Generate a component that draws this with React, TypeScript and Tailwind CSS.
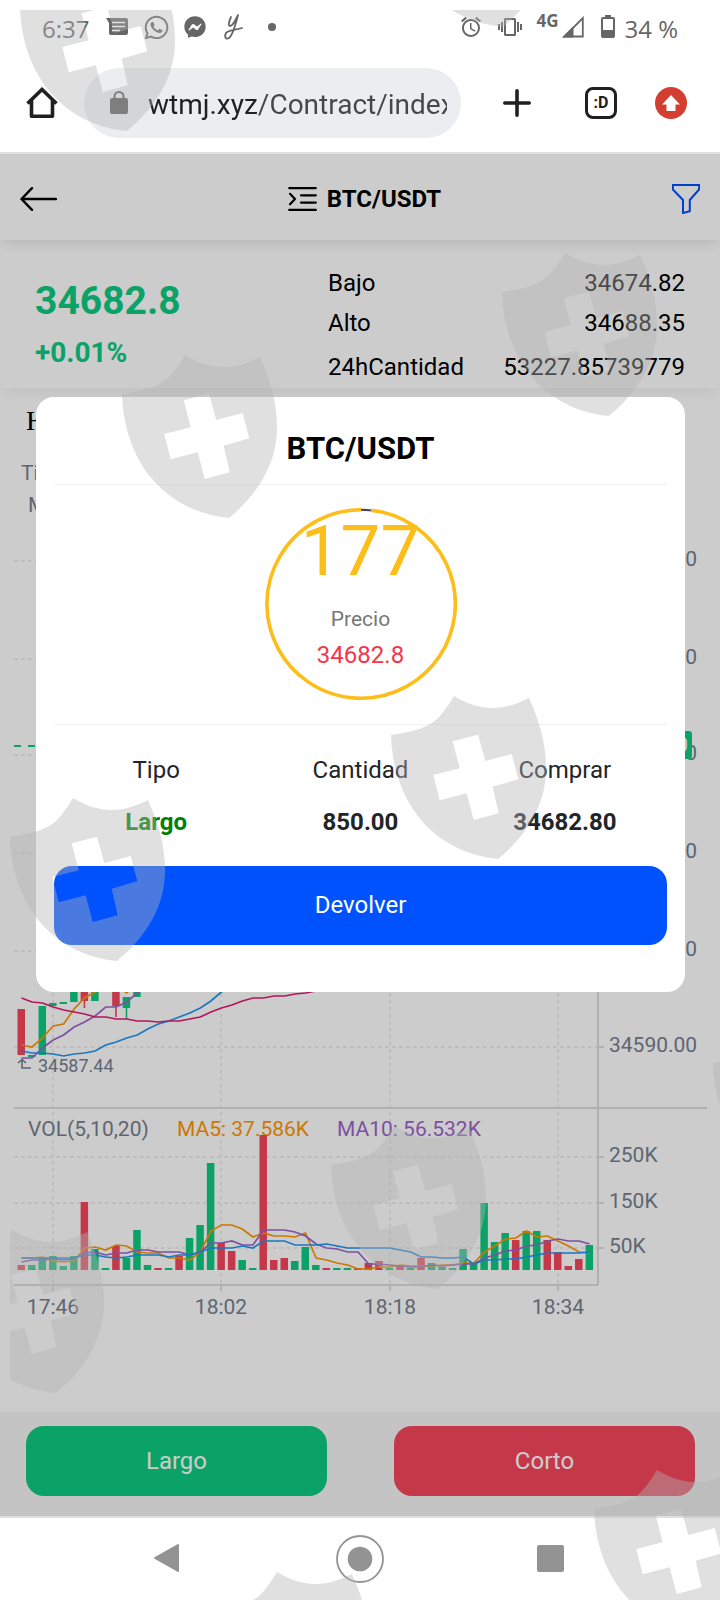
import { FaFacebookMessenger, FaWhatsapp } from "react-icons/fa";
import { MdAlarm, MdVibration } from "react-icons/md";

const GREEN = "#0ecb81";
const RED = "#f6465d";
const ORANGE = "#ff9600";
const PURPLE = "#9d65c9";
const BLUE = "#2196f3";
const PINK = "#e11d74";
const AXIS = "#76808f";

// Candle slots are evenly spaced, 55 on screen
const STEP = 10.52;
const centerX = (i: number) => 21.5 + STEP * i;

const VOLUME_BASE = 1270;

const volumeHeights = [
  5, 5, 13, 14, 4, 14, 68, 21, 2, 24, 12, 40, 5, 2, 2, 14, 32, 45, 107, 27, 19, 10, 2, 135, 10, 12, 9, 23, 5,
  2, 2, 2, 2, 7, 9, 2, 5, 2, 12, 7, 3, 2, 21, 7, 67, 28, 37, 30, 39, 39, 30, 18, 4, 11, 25,
];
const fallingBars = [0, 6, 9, 13, 15, 19, 20, 23, 24, 25, 29, 32, 33, 34, 36, 38, 47, 50, 51, 52, 53];

const volumeMa5 = [
  12, 12, 13, 9, 8, 9, 22, 23, 20, 25, 24, 18, 17, 17, 12, 12, 10, 18, 39, 45, 45, 41, 33, 37, 34, 34, 33, 37,
  12, 10, 7, 5, 1, 1, 3, 3, 5, 4, 4, 4, 5, 5, 7, 7, 18, 24, 31, 32, 39, 33, 34, 29, 24, 18, 17,
];
const volumeMa10 = [
  8, 10, 10, 11, 10, 11, 17, 18, 15, 17, 17, 20, 20, 18, 18, 18, 15, 18, 27, 27, 29, 25, 25, 40, 40, 40, 38,
  34, 26, 22, 21, 18, 18, 6, 6, 5, 4, 3, 3, 5, 4, 5, 6, 6, 12, 15, 19, 20, 24, 25, 29, 31, 29, 29, 26,
];
const volumeMa20 = [
  12, 12, 12, 12, 12, 12, 15, 15, 13, 12, 13, 15, 15, 15, 13, 15, 15, 18, 22, 22, 22, 24, 22, 29, 29, 29, 25,
  25, 25, 26, 24, 22, 22, 22, 22, 22, 20, 18, 13, 13, 12, 12, 13, 6, 10, 10, 11, 11, 13, 15, 17, 17, 17, 17, 18,
];

const priceLines = [
  { color: ORANGE, ys: [1045, 1047, 1038, 1026, 1024, 1009, 998, 992, 985, 986, 993, 983] },
  { color: PURPLE, ys: [1058, 1058, 1048, 1040, 1035, 1027, 1022, 1016, 1007, 1007, 1002, 993, 983] },
  {
    color: BLUE,
    ys: [1051, 1053, 1053, 1054, 1056, 1054, 1053, 1051, 1045, 1042, 1038, 1035, 1029, 1024, 1021, 1017, 1013, 1008, 1001, 992, 983],
  },
  {
    color: PINK,
    ys: [
      998, 1002, 1003, 1007, 1010, 1012, 1014, 1017, 1017, 1019, 1019, 1021, 1021, 1022, 1021, 1021, 1019, 1017,
      1012, 1008, 1005, 1001, 998, 998, 996, 996, 994, 993, 991, 988,
    ],
  },
];

const candles = [
  { i: 0, top: 1009, bottom: 1055, low: 1055, color: RED },
  { i: 1, top: 1055, bottom: 1057, low: 1057, color: GREEN },
  { i: 2, top: 1006, bottom: 1055, low: 1055, color: GREEN },
  { i: 3, top: 1003, bottom: 1006, low: 1006, color: GREEN },
  { i: 4, top: 1002, bottom: 1004, low: 1004, color: GREEN },
  { i: 5, top: 975, bottom: 1002, low: 1002, color: GREEN },
  { i: 6, top: 975, bottom: 1001, low: 1008, color: RED },
  { i: 7, top: 975, bottom: 1001, low: 1001, color: GREEN },
  { i: 9, top: 975, bottom: 1006, low: 1017, color: RED },
  { i: 10, top: 997, bottom: 1008, low: 1019, color: GREEN },
  { i: 11, top: 975, bottom: 997, low: 997, color: GREEN },
];

const priceLabels = [
  { y: 561, label: "34740.00" },
  { y: 659, label: "34710.00" },
  { y: 755, label: "34680.00" },
  { y: 853, label: "34650.00" },
  { y: 951, label: "34620.00" },
  { y: 1047, label: "34590.00" },
];
const volumeLabels = [
  { y: 1157, label: "250K" },
  { y: 1203, label: "150K" },
  { y: 1248, label: "50K" },
];
const timeLabels = [
  { x: 53, label: "17:46" },
  { x: 221, label: "18:02" },
  { x: 390, label: "18:18" },
  { x: 558, label: "18:34" },
];

const shields = [
  [20, 7], [396, -97], [122, 394], [502, 292], [391, 735], [10, 837],
  [331, 1165], [-51, 1269], [713, 1063], [594, 1509], [214, 1611],
];

function toPoints(ys: number[]) {
  return ys.map((y, i) => `${centerX(i).toFixed(1)},${y}`).join(" ");
}

function StatusBar() {
  return (
    <div className="flex h-[54px] items-center justify-between px-[42px] font-['Open_Sans',sans-serif] text-[#666]">
      <div className="flex items-center">
        <span className="mt-1 w-[64px] text-2xl">6:37</span>
        <svg className="h-[18px] w-[22px]" viewBox="0 0 22 18" fill="currentColor">
          <path d="M0 0H20Q22 0 22 2V15Q22 17 20 17H5Q3 17 3 15V5Z" />
          <path d="M6 4.5H19M6 8.5H19M6 12.5H14" stroke="#fff" strokeWidth="1.6" />
        </svg>
        <FaWhatsapp className="ml-[15px] size-[27px]" />
        <FaFacebookMessenger className="ml-[14px] size-[22px]" />
        <svg className="ml-[18px] h-[28px] w-[20px]" viewBox="0 0 20 28" fill="none" stroke="currentColor" strokeWidth="1.8" strokeLinecap="round" strokeLinejoin="round">
          <path d="M7 4C5 8 4 13 6 13C9 13 11 8 14 2C12 10 9 22 5 25C2 27 0 24 2 20C4 17 12 17 18 15" />
        </svg>
        <span className="ml-6 size-2 rounded-full bg-[#666]" />
      </div>
      <div className="flex items-center">
        <MdAlarm className="size-6" />
        <MdVibration className="ml-[15px] size-6" />
        <span className="ml-[14px] -mt-3 text-[17px] leading-5 font-bold">4G</span>
        <svg className="ml-1 h-[22px] w-[22px]" viewBox="0 0 22 22">
          <path d="M20.8 2V20.5H2.5Z" fill="none" stroke="currentColor" strokeWidth="1.8" />
          <path d="M0 21.5L11.5 10V21.5Z" fill="currentColor" />
        </svg>
        <svg className="ml-[17px] h-6 w-[14px]" viewBox="0 0 14 24">
          <path d="M4 0H10V2H4Z" fill="currentColor" />
          <rect x="1" y="3" width="12" height="19" rx="1" fill="none" stroke="currentColor" strokeWidth="2" />
          <path d="M1 15H13V23H1Z" fill="currentColor" />
        </svg>
        <span className="mt-1 ml-[9px] text-2xl">34 %</span>
      </div>
    </div>
  );
}

function BrowserBar() {
  return (
    <div className="flex h-[98px] items-center pr-[33px] pl-[26px] text-[#202020]">
      <button aria-label="Home">
        <svg className="size-8" viewBox="0 0 32 32" fill="none" stroke="currentColor" strokeWidth="3.6" strokeLinejoin="round">
          <path d="M5.5 13V29.3H26.5V13" />
          <path d="M1.5 16.5L16 2.5L30.5 16.5" strokeLinejoin="miter" />
        </svg>
      </button>
      <div className="ml-[26px] flex h-[70px] min-w-0 flex-1 items-center rounded-full bg-[#ebedf1] pr-[14px] pl-[26px]">
        <svg className="h-6 w-[18px] shrink-0 text-[#595959]" viewBox="0 0 18 24">
          <rect y="7" width="18" height="16" rx="2" fill="currentColor" />
          <path d="M4.500 9V5.500A4.500 4.500 0 0 1 13.500 5.500V9" fill="none" stroke="currentColor" strokeWidth="2" />
        </svg>
        <input
          aria-label="Address"
          className="ml-5 min-w-0 flex-1 bg-[linear-gradient(to_right,#202020_109px,#474747_109px)] bg-clip-text pt-1 text-[28px] leading-10 text-transparent outline-none"
          defaultValue="wtmj.xyz/Contract/index"
        />
      </div>
      <button aria-label="New tab" className="ml-[42px]">
        <svg className="size-7" viewBox="0 0 28 28" stroke="currentColor" strokeWidth="3.6" strokeLinecap="round">
          <path d="M14 1.8V26.2M1.8 14H26.2" />
        </svg>
      </button>
      <button className="ml-[54px] flex size-8 items-center justify-center rounded-lg border-[3px] border-[#202020] text-base leading-none font-bold" aria-label="Tabs">
        :D
      </button>
      <button aria-label="Update" className="ml-[38px]">
        <svg className="size-8" viewBox="0 0 32 32">
          <circle cx="16" cy="16" r="16" fill="#d43e31" />
          <path d="M16 8L25 17.500H20.500V24H11.500V17.500H7Z" fill="#fff" />
        </svg>
      </button>
    </div>
  );
}

function AppHeader() {
  return (
    <header className="flex h-[86px] items-center justify-between px-5 pt-1 shadow-[0_8px_12px_-4px_rgba(0,0,0,0.1)]">
      <button aria-label="Back">
        <svg className="h-6 w-[37px]" viewBox="0 0 37 24" fill="none" stroke="#000" strokeWidth="2.4" strokeLinecap="round" strokeLinejoin="round">
          <path d="M12 1.2L1.5 12L12 22.8M1.5 12H36" />
        </svg>
      </button>
      <div className="flex items-center gap-[10px]">
        <svg className="h-6 w-[29px]" viewBox="0 0 29 24" fill="none" stroke="#000" strokeWidth="2.2" strokeLinecap="round" strokeLinejoin="round">
          <path d="M1.2 1.1H27.8M13 8.3H27.8M13 15.6H27.8M1.2 22.9H27.8M2 6.8L7 12L2 17.2" />
        </svg>
        <h1 className="text-2xl font-bold">BTC/USDT</h1>
      </div>
      <button aria-label="Filter">
        <svg className="h-[30px] w-7" viewBox="0 0 28 30" fill="none" stroke="#0052ff" strokeWidth="2">
          <path d="M.9 1H27.1V5.5L17.8 16V27.3L11 29V16L.9 5.5Z" />
        </svg>
      </button>
    </header>
  );
}

function Stats() {
  return (
    <section className="flex h-[148px] px-[35px] shadow-[0_8px_12px_-4px_rgba(0,0,0,0.06)]">
      <div className="flex flex-1 flex-col gap-4 pt-[41px] font-bold text-[#0ecb81]">
        <p className="text-[39px] leading-10">34682.8</p>
        <p className="text-[28px] leading-8">+0.01%</p>
      </div>
      <dl className="w-[357px] pt-[31px] text-2xl leading-6">
        <div className="flex justify-between">
          <dt>Bajo</dt>
          <dd>34674.82</dd>
        </div>
        <div className="mt-4 flex justify-between">
          <dt>Alto</dt>
          <dd>34688.35</dd>
        </div>
        <div className="mt-5 flex justify-between">
          <dt>24hCantidad</dt>
          <dd>53227.85739779</dd>
        </div>
      </dl>
    </section>
  );
}

function Chart() {
  return (
    <svg className="block w-full font-[Roboto,sans-serif] text-[21px]" viewBox="0 440 720 900" fill={AXIS}>
      {/* Grid */}
      <g stroke="#ededed" strokeWidth="2" strokeDasharray="3.5 3.5">
        {[...priceLabels, ...volumeLabels].map(({ y }) => (
          <line key={y} x1="14" x2="598" y1={y} y2={y} />
        ))}
        {timeLabels.map(({ x }) => (
          <line key={x} x1={x} x2={x} y1="440" y2="1284" />
        ))}
      </g>

      <text x="21" y="480">Ti</text>
      <text x="28" y="512">M</text>

      {/* Candles */}
      {candles.map((c) => (
        <g key={c.i} fill={c.color}>
          <rect x={centerX(c.i) - 4} y={c.top} width="7.5" height={c.bottom - c.top} />
          <rect x={centerX(c.i) - 1} y={c.top} width="1.6" height={c.low - c.top} />
        </g>
      ))}
      {priceLines.map((line) => (
        <polyline key={line.color} points={toPoints(line.ys)} fill="none" stroke={line.color} strokeWidth="1.7" />
      ))}
      <path d="M18 1063L22 1059.500L26 1063M22 1060V1068H31" fill="none" stroke={AXIS} strokeWidth="1.6" />
      <text x="38" y="1072" className="text-[18px]">34587.44</text>

      {/* Volume */}
      <text x="28" y="1136">VOL(5,10,20)</text>
      <text x="177" y="1136" fill={ORANGE}>MA5: 37.586K</text>
      <text x="337" y="1136" fill={PURPLE}>MA10: 56.532K</text>
      {volumeHeights.map((h, i) => (
        <rect
          key={i}
          x={centerX(i) - 4}
          y={VOLUME_BASE - h}
          width="7.5"
          height={h}
          fill={fallingBars.includes(i) ? RED : GREEN}
        />
      ))}
      {[
        { color: ORANGE, values: volumeMa5 },
        { color: PURPLE, values: volumeMa10 },
        { color: BLUE, values: volumeMa20 },
      ].map(({ color, values }) => (
        <polyline
          key={color}
          points={toPoints(values.map((v) => VOLUME_BASE - v))}
          fill="none"
          stroke={color}
          strokeWidth="1.7"
        />
      ))}

      {/* Axes */}
      <g stroke="#ddd" strokeWidth="2">
        <path d="M14 1108H707M598 440V1285M14 1285H598" />
        {[...priceLabels, ...volumeLabels].map(({ y }) => (
          <path key={y} d={`M598 ${y}H604`} />
        ))}
        {timeLabels.map(({ x }) => (
          <path key={x} d={`M${x} 1285V1291`} />
        ))}
      </g>
      {[...priceLabels, ...volumeLabels].map(({ y, label }) => (
        <text key={label} x="609" y={y + 5}>{label}</text>
      ))}
      {timeLabels.map(({ x, label }) => (
        <text key={label} x={x} y="1314" textAnchor="middle">{label}</text>
      ))}

      {/* Last price */}
      <line x1="14" x2="598" y1="746" y2="746" stroke={GREEN} strokeWidth="2" strokeDasharray="7 7" />
      <rect x="598" y="731" width="94" height="28" rx="3" fill={GREEN} />
      <text x="600" y="752" fill="#fff">34682.80</text>
    </svg>
  );
}

function OrderDialog() {
  return (
    <div role="dialog" aria-labelledby="order-title" className="w-full rounded-[18px] bg-white px-[18px] pb-[47px] text-center">
      <h2 id="order-title" className="border-b border-[#f2f2f2] pt-[34px] pb-[17px] text-[31px] leading-9 font-bold">
        BTC/USDT
      </h2>
      <div className="border-b border-[#f2f2f2] pt-[23px] pb-6">
        <div className="relative mx-auto size-48 pt-[7px]">
          <svg className="absolute inset-0 size-full" viewBox="0 0 192 192" fill="none">
            <circle cx="96" cy="96" r="94.200" stroke="#3f4156" strokeWidth="2" />
            <path d="M105.800 2.300A94.200 94.200 0 1 1 96 1.800" stroke="#fdbe19" strokeWidth="3.600" />
          </svg>
          <p className="text-[71px] leading-[72px] text-[#fdbe19]">177</p>
          <p className="mt-[18px] text-[21px] leading-7 text-[#777]">Precio</p>
          <p className="mt-2 text-2xl leading-7 text-[#f6354a]">34682.8</p>
        </div>
      </div>
      <table className="mt-[19px] w-full table-fixed text-2xl text-[#212529]">
        <thead>
          <tr className="h-[52px]">
            <th className="font-normal">Tipo</th>
            <th className="font-normal">Cantidad</th>
            <th className="font-normal">Comprar</th>
          </tr>
        </thead>
        <tbody>
          <tr className="h-[52px] font-bold">
            <td className="text-[#008000]">Largo</td>
            <td>850.00</td>
            <td>34682.80</td>
          </tr>
        </tbody>
      </table>
      <button className="mt-[18px] h-[79px] w-full rounded-[18px] bg-[#0052ff] pb-[2px] text-2xl text-white">Devolver</button>
    </div>
  );
}

function NavBar() {
  return (
    <nav className="flex h-[84px] items-center justify-between border-t-2 border-[#e0e0e0] px-[142px] text-[#939393]">
      <button aria-label="Back">
        <svg className="size-12" viewBox="0 0 48 48" fill="currentColor" stroke="currentColor" strokeWidth="2" strokeLinejoin="round">
          <path d="M13 23L36 10V36Z" />
        </svg>
      </button>
      <button aria-label="Home screen">
        <svg className="size-12" viewBox="0 0 48 48" fill="currentColor">
          <circle cx="24" cy="24" r="23" fill="none" stroke="currentColor" strokeWidth="1.8" />
          <circle cx="24" cy="24" r="12.300" />
        </svg>
      </button>
      <button aria-label="Recent apps">
        <svg className="size-12" viewBox="0 0 48 48" fill="currentColor">
          <rect x="7" y="10" width="27" height="27" rx="2" />
        </svg>
      </button>
    </nav>
  );
}

function Watermark() {
  return (
    <div className="pointer-events-none absolute top-[10px] right-0 bottom-0 left-[10px]">
      <svg className="size-full overflow-hidden" fill="#b4b4b4" fillOpacity="0.41" fillRule="evenodd" aria-hidden="true">
        {shields.map(([x, y]) => (
          <path
            key={`${x}-${y}`}
            transform={`translate(${x - 10} ${y - 10})`}
            d="M0 0C22 -3 38 -8 46 -16C52 -22 57 -29 63 -39C72 -34 84 -27 102 -27C115 -27 128 -32 138 -37C149 -12 155 8 155 34C155 70 135 101 107 124C45 118 2 70 0 0ZM61.700 6.300L87 -.3L94.300 26L120.700 19L127.300 44.300L101.700 51.700L107.700 78.300L82.700 85L75.700 58.300L48.700 65.300L42.300 40L68.700 33.300Z"
          />
        ))}
      </svg>
    </div>
  );
}

function App() {
  return (
    <div className="relative overflow-hidden bg-white font-[Roboto,sans-serif] text-black">
      <StatusBar />
      <BrowserBar />

      <main className="relative border-t-2 border-[#e0e0e0]">
        <AppHeader />
        <Stats />
        <p className="h-[52px] pt-[15px] pl-[26px] font-['Liberation_Serif',serif] text-[28px] leading-9">H</p>
        <Chart />
        <div className="mt-[72px] flex gap-[67px] bg-[#f5f5f5] pt-[14px] pr-[25px] pb-5 pl-[26px] text-2xl text-white">
          <button className="h-[70px] flex-1 rounded-[18px] bg-[#0ecb81]">Largo</button>
          <button className="h-[70px] flex-1 rounded-[18px] bg-[#f6465d]">Corto</button>
        </div>

        <div className="absolute inset-0 flex items-start bg-black/20 pt-[243px] pr-[35px] pl-9">
          <OrderDialog />
        </div>
      </main>

      <NavBar />
      <Watermark />
    </div>
  );
}

export default App;
